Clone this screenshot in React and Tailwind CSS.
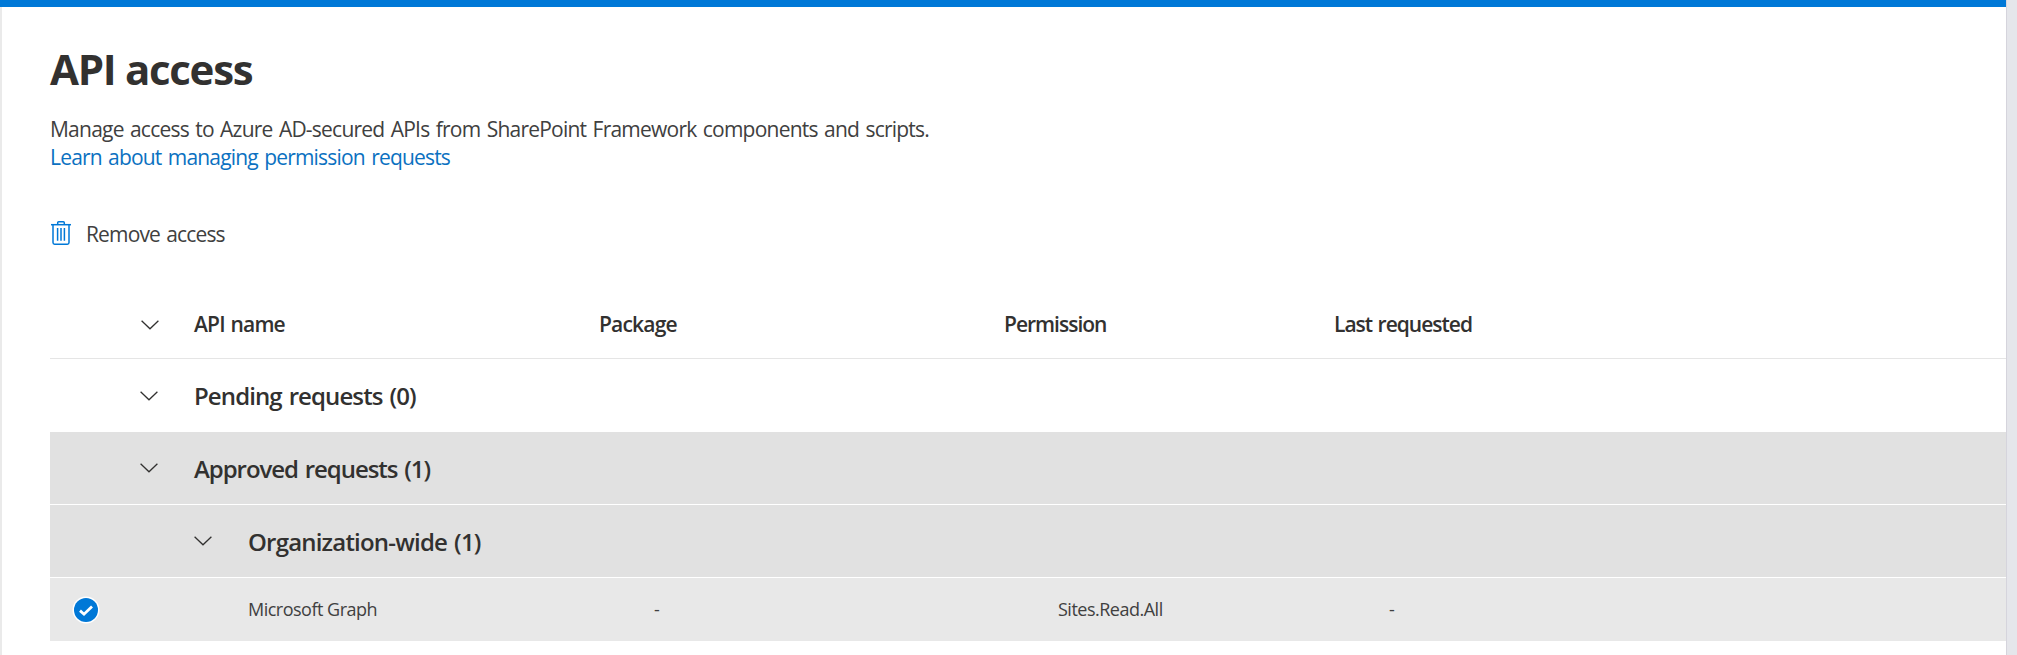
function Chevron() {
  return (
    <svg className="shrink-0" width="18" height="10" viewBox="0 0 18 10" fill="none" stroke="#323130" strokeWidth="1.3">
      <path d="M0.6 0.8L9 8.8L17.4 0.8" />
    </svg>
  );
}

function TrashIcon() {
  return (
    <svg className="shrink-0" width="20" height="24" viewBox="0 0 20 24" fill="none" stroke="#0078d7" strokeWidth="1.5">
      <path d="M0 3.7H20" />
      <path d="M6.7 3.7V1.8Q6.7 0.8 7.7 0.8H12.3Q13.3 0.8 13.3 1.8V3.7" />
      <path d="M2 3.7V21.6Q2 23.2 3.6 23.2H16.4Q18 23.2 18 21.6V3.7" />
      <path d="M6.6 7V19.8M10 7V19.8M13.4 7V19.8" />
    </svg>
  );
}

function CheckBadge() {
  return (
    <svg className="shrink-0" width="28" height="28" viewBox="0 0 28 28">
      <circle cx="14" cy="14" r="13.5" fill="#fff" />
      <circle cx="14" cy="14" r="12" fill="#0078d7" />
      <path d="M8 14.6L12 18.2L20 10.6" fill="none" stroke="#fff" strokeWidth="2.8" />
    </svg>
  );
}

function GroupRow({ label, className, labelClass }) {
  return (
    <div className={"flex h-[73px] items-center " + className}>
      <Chevron />
      <span className={"ml-9 text-2xl font-semibold whitespace-nowrap [word-spacing:1.6px] " + labelClass}>{label}</span>
    </div>
  );
}

export default function App() {
  return (
    <div className="flex h-[655px] w-[2017px] overflow-hidden bg-white font-['Open_Sans',sans-serif] text-[#323130]">
      <div className="flex w-[2006px] shrink-0 flex-col">
        <div className="h-[7px] shrink-0 bg-[#0078d7]" />
        <main className="flex-1 border-l-2 border-[#eaeaea] pl-12">
          <h1 className="pt-[34px] text-[42px] leading-[56px] font-bold whitespace-nowrap tracking-[-1.3px]">API access</h1>
          <p className="mt-[18px] text-[21px] leading-7 whitespace-nowrap tracking-[-0.77px] [word-spacing:1.6px] text-[#404040]">
            Manage access to Azure AD-secured APIs from SharePoint Framework components and scripts.
          </p>
          <a className="block w-fit text-[21px] leading-7 whitespace-nowrap tracking-[-0.81px] [word-spacing:1.6px] text-[#0b71c1]">
            Learn about managing permission requests
          </a>
          <button className="mt-[39px] flex h-12 items-center">
            <span className="ml-px flex pb-0.5"><TrashIcon /></span>
            <span className="ml-[15px] text-[21px] leading-7 whitespace-nowrap tracking-[-0.85px] [word-spacing:1.6px] text-[#404040]">Remove access</span>
          </button>
          <div className="mt-[34px] flex h-[67px] items-center border-b border-[#e5e5e5] text-[21px] font-semibold whitespace-nowrap">
            <div className="flex w-[144px] shrink-0 pl-[91px]"><Chevron /></div>
            <div className="w-[405px] shrink-0 tracking-[-0.8px] [word-spacing:1px]">API name</div>
            <div className="w-[405px] shrink-0 tracking-[-0.8px]">Package</div>
            <div className="w-[330px] shrink-0 tracking-[-1px]">Permission</div>
            <div className="tracking-[-1px] [word-spacing:1px]">Last requested</div>
          </div>
          <GroupRow label="Pending requests (0)" className="pl-[90px]" labelClass="tracking-[-0.9px]" />
          <GroupRow label="Approved requests (1)" className="border-b border-white bg-[#e1e1e1] pl-[90px]" labelClass="pt-0.5 tracking-[-1.05px]" />
          <GroupRow label="Organization-wide (1)" className="border-b border-white bg-[#e1e1e1] pl-36" labelClass="pt-0.5 tracking-[-0.8px]" />
          <div className="flex h-[63px] items-center bg-[#e8e8e8] text-lg whitespace-nowrap text-[#404040]">
            <div className="flex w-[198px] shrink-0 pl-[22px]"><CheckBadge /></div>
            <div className="w-[405px] shrink-0 pb-px tracking-[-0.5px]">Microsoft Graph</div>
            <div className="w-[405px] shrink-0 pb-px pl-px">-</div>
            <div className="w-[330px] shrink-0 pb-px tracking-[-0.5px]">Sites.Read.All</div>
            <div className="pb-px pl-px">-</div>
          </div>
        </main>
      </div>
      <div className="flex-1 border-l border-[#d5d4dc] bg-[#e5e6eb]" />
    </div>
  );
}
